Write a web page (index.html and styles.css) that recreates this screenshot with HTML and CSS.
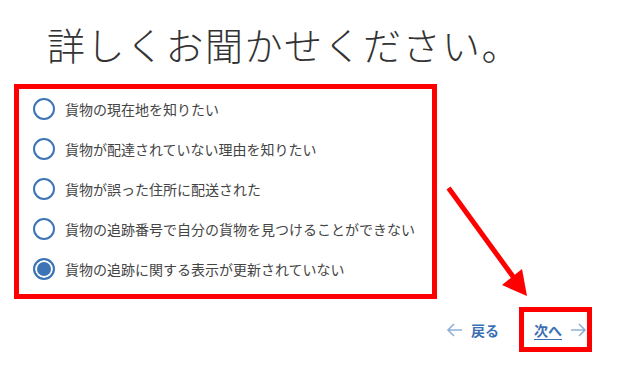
FILE: index.html
```html
<!DOCTYPE html>
<html lang="ja">
<head>
<meta charset="utf-8">
<link rel="stylesheet" href="styles.css">
</head>
<body>
<h1 class="title">詳しくお聞かせください。</h1>
<div class="options">
  <label class="option"><span class="radio"></span><span class="label">貨物の現在地を知りたい</span></label>
  <label class="option"><span class="radio"></span><span class="label">貨物が配達されていない理由を知りたい</span></label>
  <label class="option"><span class="radio"></span><span class="label">貨物が誤った住所に配送された</span></label>
  <label class="option"><span class="radio"></span><span class="label">貨物の追跡番号で自分の貨物を見つけることができない</span></label>
  <label class="option"><span class="radio checked"></span><span class="label">貨物の追跡に関する表示が更新されていない</span></label>
</div>
<div class="nav">
  <a class="back"><svg class="arr" width="17" height="14" viewBox="0 0 17 14"><path d="M16 7H2M8 1L2 7l6 6" fill="none" stroke="#8fb1d9" stroke-width="1.6"/></svg><span>戻る</span></a>
  <a class="next"><span class="next-text">次へ</span><svg class="arr" width="17" height="14" viewBox="0 0 17 14"><path d="M1 7h14M9 1l6 6-6 6" fill="none" stroke="#8fb1d9" stroke-width="1.6"/></svg></a>
</div>
<svg class="pointer" width="625" height="370" viewBox="0 0 625 370">
  <line x1="450" y1="190" x2="514" y2="278" stroke="#ff0000" stroke-width="5" stroke-linecap="square"/>
  <polygon points="527,296 502,285 522,269" fill="#ff0000"/>
</svg>
</body>
</html>
```

FILE: styles.css
```css
html, body {
  margin: 0;
  padding: 0;
  background: #ffffff;
}
body {
  font-family: "Noto Sans CJK JP", "Noto Sans", sans-serif;
  color: #444444;
  width: 625px;
  height: 370px;
  position: relative;
  overflow: hidden;
}
.title {
  margin: 0;
  padding: 25px 0 0 47px;
  font-size: 38px;
  line-height: 38px;
  font-weight: 300;
  color: #333333;
  letter-spacing: 1.5px;
  white-space: nowrap;
}
.options {
  box-sizing: border-box;
  margin: 21px 0 0 14px;
  width: 423px;
  height: 215px;
  border: 5px solid #ff0000;
  padding: 0 0 5px 14px;
  display: flex;
  flex-direction: column;
}
.option {
  height: 40px;
  display: flex;
  align-items: center;
  gap: 10px;
}
.radio {
  box-sizing: border-box;
  width: 22px;
  height: 22px;
  border-radius: 50%;
  border: 2.5px solid #3d74b6;
  background: #ffffff;
  flex: none;
}
.radio.checked {
  background: #3d74b6;
  box-shadow: inset 0 0 0 2px #ffffff;
}
.label {
  font-size: 14px;
  line-height: 20px;
  color: #444444;
  white-space: nowrap;
}
.nav {
  margin-top: 8px;
  display: flex;
  justify-content: flex-end;
  align-items: center;
  padding-right: 33px;
  gap: 20px;
}
.back, .next {
  display: flex;
  align-items: center;
  gap: 8px;
  font-size: 14px;
  font-weight: 700;
  color: #3b6fb3;
}
.next {
  box-sizing: border-box;
  width: 73px;
  height: 45px;
  border: 5px solid #ff0000;
  padding-left: 10px;
}
.next-text {
  text-decoration: underline;
  text-underline-offset: 3px;
}
.arr {
  display: block;
}
.pointer {
  position: absolute;
  left: 0;
  top: 0;
  pointer-events: none;
}
```
